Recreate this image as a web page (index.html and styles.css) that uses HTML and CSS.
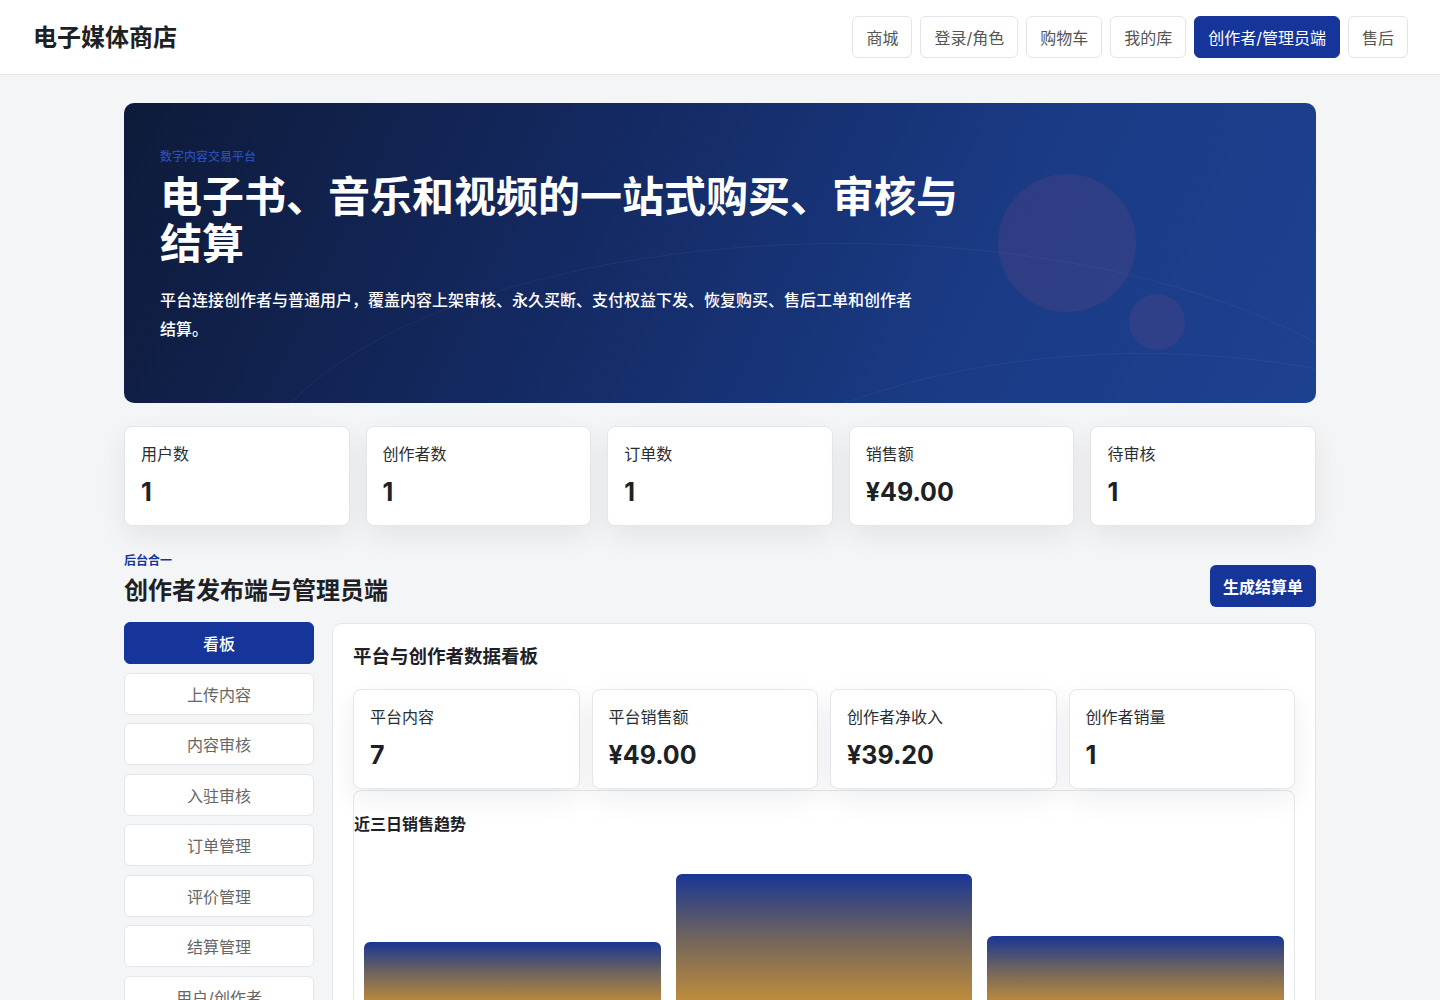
FILE: index.html
```html
<!DOCTYPE html>
<html lang="zh-CN">
<head>
    <meta charset="UTF-8">
    <title>电子媒体商店</title>
    <link rel="stylesheet" href="styles.css">
</head>
<body>
    <header class="topbar">
        <div class="brand">电子媒体商店</div>
        <nav class="nav">
            <button class="nav-btn">商城</button>
            <button class="nav-btn">登录/角色</button>
            <button class="nav-btn">购物车</button>
            <button class="nav-btn">我的库</button>
            <button class="nav-btn active">创作者/管理员端</button>
            <button class="nav-btn">售后</button>
        </nav>
    </header>

    <main class="page">
        <section class="hero">
            <div class="hero-deco arc-a"></div>
            <div class="hero-deco arc-b"></div>
            <div class="hero-deco dot-big"></div>
            <div class="hero-deco dot-small"></div>
            <div class="hero-content">
                <div class="eyebrow">数字内容交易平台</div>
                <h1>电子书、音乐和视频的一站式购买、审核与结算</h1>
                <p>平台连接创作者与普通用户，覆盖内容上架审核、永久买断、支付权益下发、恢复购买、售后工单和创作者结算。</p>
            </div>
        </section>

        <section class="stats">
            <div class="stat-card"><div class="stat-label">用户数</div><div class="stat-value">1</div></div>
            <div class="stat-card"><div class="stat-label">创作者数</div><div class="stat-value">1</div></div>
            <div class="stat-card"><div class="stat-label">订单数</div><div class="stat-value">1</div></div>
            <div class="stat-card"><div class="stat-label">销售额</div><div class="stat-value">¥49.00</div></div>
            <div class="stat-card"><div class="stat-label">待审核</div><div class="stat-value">1</div></div>
        </section>

        <section class="section-head">
            <div>
                <div class="section-eyebrow">后台合一</div>
                <h2>创作者发布端与管理员端</h2>
            </div>
            <button class="primary-btn">生成结算单</button>
        </section>

        <section class="admin">
            <aside class="side">
                <button class="side-item active">看板</button>
                <button class="side-item">上传内容</button>
                <button class="side-item">内容审核</button>
                <button class="side-item">入驻审核</button>
                <button class="side-item">订单管理</button>
                <button class="side-item">评价管理</button>
                <button class="side-item">结算管理</button>
                <button class="side-item">用户/创作者</button>
            </aside>

            <div class="panel">
                <h3>平台与创作者数据看板</h3>
                <div class="mini-stats">
                    <div class="stat-card"><div class="stat-label">平台内容</div><div class="stat-value">7</div></div>
                    <div class="stat-card"><div class="stat-label">平台销售额</div><div class="stat-value">¥49.00</div></div>
                    <div class="stat-card"><div class="stat-label">创作者净收入</div><div class="stat-value">¥39.20</div></div>
                    <div class="stat-card"><div class="stat-label">创作者销量</div><div class="stat-value">1</div></div>
                </div>
                <div class="chart-card">
                    <h4>近三日销售趋势</h4>
                    <div class="bars">
                        <div class="bar" style="height: 64px"></div>
                        <div class="bar" style="height: 132px"></div>
                        <div class="bar" style="height: 70px"></div>
                    </div>
                </div>
            </div>
        </section>
    </main>
</body>
</html>
```

FILE: styles.css
```css
* {
    box-sizing: border-box;
}
body {
    margin: 0;
    background: #f3f5f6;
    color: #1f2328;
    font-family: Inter, "Noto Sans CJK SC", sans-serif;
}
button {
    font-family: inherit;
    cursor: pointer;
}
.topbar {
    height: 75px;
    background: #fff;
    border-bottom: 1px solid #e4e8ea;
    display: flex;
    align-items: center;
    justify-content: space-between;
    padding: 0 32px 0 33px;
}
.brand {
    margin-top: -3px;
    font-size: 24px;
    font-weight: 700;
    color: #1d2125;
}
.nav {
    display: flex;
    gap: 8px;
}
.nav-btn {
    height: 42px;
    padding: 0 13px;
    background: #fff;
    border: 1px solid #e1e4e8;
    border-radius: 6px;
    font-size: 16px;
    color: #555;
}
.nav-btn.active {
    background: #15359a;
    border-color: #15359a;
    color: #fff;
}
.page {
    max-width: 1192px;
    margin: 0 auto;
    padding: 28px 0 40px;
}
.hero {
    position: relative;
    overflow: hidden;
    height: 300px;
    border-radius: 10px;
    background: linear-gradient(115deg, #0e1a39 0%, #142a64 40%, #1a3a84 70%, #1d4191 100%);
    padding: 47px 36px;
    color: #fff;
}
.hero-content {
    position: relative;
}
.eyebrow {
    font-size: 12px;
    line-height: 14px;
    color: #2b4db3;
    font-weight: 500;
}
.hero h1 {
    margin: 9px 0 0;
    max-width: 810px;
    font-size: 42px;
    line-height: 47px;
    font-weight: 700;
}
.hero p {
    margin: 19px 0 0;
    max-width: 760px;
    font-size: 16px;
    line-height: 29px;
    font-weight: 500;
}
.hero-deco {
    position: absolute;
    border-radius: 50%;
}
.dot-big {
    left: 874px;
    top: 71px;
    width: 138px;
    height: 138px;
    background: rgba(140, 80, 130, 0.18);
}
.dot-small {
    left: 1005px;
    top: 191px;
    width: 56px;
    height: 56px;
    background: rgba(140, 80, 130, 0.18);
}
.arc-a {
    left: 120px;
    top: 140px;
    width: 1200px;
    height: 520px;
    border: 1px solid rgba(255, 255, 255, 0.05);
}
.arc-b {
    left: 520px;
    top: 250px;
    width: 1000px;
    height: 500px;
    border: 1px solid rgba(255, 255, 255, 0.05);
}
.stats {
    margin-top: 23px;
    display: grid;
    grid-template-columns: repeat(5, 1fr);
    gap: 16px;
}
.stat-card {
    background: #fff;
    border: 1px solid #e3e6ea;
    border-radius: 8px;
    padding: 16px 16px 17px;
    box-shadow: 0 10px 28px rgba(20, 30, 50, 0.07);
}
.stat-label {
    font-size: 16px;
    line-height: 22px;
    color: #2a2e33;
}
.stat-value {
    margin-top: 11px;
    font-size: 25px;
    line-height: 32px;
    font-weight: 700;
    color: #1d2125;
}
.section-head {
    margin-top: 28px;
    display: flex;
    justify-content: space-between;
    align-items: flex-end;
}
.section-eyebrow {
    font-size: 12px;
    line-height: 14px;
    font-weight: 700;
    color: #15359a;
}
.section-head h2 {
    margin: 7px 0 0;
    font-size: 24px;
    line-height: 32px;
    font-weight: 700;
    color: #1d2125;
}
.primary-btn {
    height: 42px;
    padding: 0 13px;
    background: #15359a;
    border: none;
    border-radius: 6px;
    color: #fff;
    font-size: 16px;
    font-weight: 700;
}
.admin {
    margin-top: 15px;
    display: grid;
    grid-template-columns: 190px 1fr;
    gap: 18px;
    align-items: start;
}
.side {
    display: flex;
    flex-direction: column;
    gap: 8.5px;
}
.side-item {
    height: 42px;
    background: #fff;
    border: 1px solid #e3e6ea;
    border-radius: 6px;
    font-size: 16px;
    color: #666;
}
.side-item.active {
    background: #15359a;
    border-color: #15359a;
    color: #fff;
    font-weight: 500;
}
.panel {
    margin-top: 1px;
    background: #fff;
    border: 1px solid #e3e6ea;
    border-radius: 10px;
    padding: 19px 20px 20px;
}
.panel h3 {
    margin: 0;
    font-size: 18.5px;
    line-height: 26px;
    font-weight: 700;
    color: #1d2125;
}
.mini-stats {
    margin-top: 20px;
    display: grid;
    grid-template-columns: repeat(4, 1fr);
    gap: 12px;
}
.chart-card {
    margin-top: 1px;
    border: 1px solid #e3e6ea;
    border-radius: 8px;
    padding: 20px 0 0;
    background: #fff;
}
.chart-card h4 {
    margin: 0;
    font-size: 16px;
    line-height: 26px;
    font-weight: 700;
    color: #1d2125;
}
.bars {
    height: 164px;
    margin-top: 5px;
    padding: 0 10px;
    display: flex;
    align-items: flex-end;
    gap: 15px;
}
.bar {
    flex: 1;
    border-radius: 6px 6px 0 0;
    background: linear-gradient(180deg, #193694 0%, #6a6160 45%, #c69038 100%);
}
```
